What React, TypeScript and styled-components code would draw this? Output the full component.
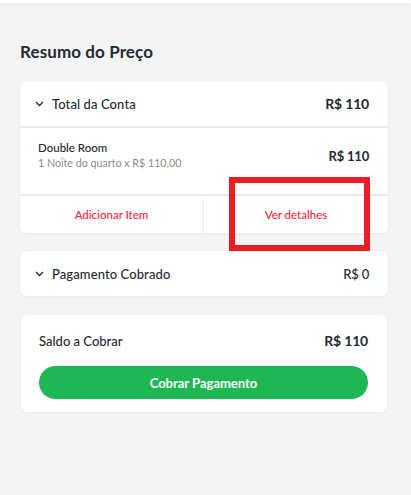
import React from "react";
import styled, { createGlobalStyle } from "styled-components";

const Global = createGlobalStyle`
  html, body { margin: 0; padding: 0; background: #f3f4f6; }
  body { font-family: Lato, "Noto Sans", sans-serif; color: #1f2430; }
  * { box-sizing: border-box; }
`;

const Page = styled.div`
  position: relative;
  min-height: 495px;
  background: #f3f4f6;
`;

const TopBar = styled.div`
  height: 3px;
  background: #ffffff;
  box-shadow: 0 2px 6px rgba(0, 0, 0, 0.06);
`;

const Content = styled.div`
  padding: 38px 23px 0 20px;
  display: flex;
  flex-direction: column;
`;

const Title = styled.h2`
  margin: 0 0 19px;
  font-size: 17px;
  font-weight: 700;
  line-height: 22px;
  color: #262a33;
  letter-spacing: 0.1px;
`;

const Card = styled.div<{ $inset?: boolean }>`
  background: #fff;
  border-radius: 7px;
  box-shadow: 0 1px 3px rgba(0, 0, 0, 0.05);
  margin: ${(p) => (p.$inset ? "0 1px 0 1px" : "0")};
  overflow: hidden;
`;

const HeaderRow = styled.div<{ $bordered?: boolean }>`
  height: ${(p) => (p.$bordered ? "46px" : "45px")};
  display: flex;
  align-items: center;
  padding: 0 19px 0 15px;
  border-bottom: ${(p) => (p.$bordered ? "2px solid #ececee" : "none")};
`;

const Chevron = styled.svg`
  width: 9px;
  height: 6px;
  margin-right: 8px;
  flex: none;
`;

const HeaderLabel = styled.span`
  flex: 1;
  font-size: 13px;
  font-weight: 500;
  color: #262a33;
  letter-spacing: 0.1px;
`;

const Amount = styled.span<{ $size?: number; $weight?: number; $offset?: number }>`
  font-size: ${(p) => p.$size ?? 14}px;
  font-weight: ${(p) => p.$weight ?? 700};
  line-height: 16px;
  margin-top: ${(p) => p.$offset ?? 0}px;
  color: #262a33;
  letter-spacing: -0.2px;
`;

const ItemRow = styled.div`
  height: 68px;
  display: flex;
  align-items: flex-start;
  padding: 13px 19px 0 18px;
  border-bottom: 2px solid #ececee;
`;

const ItemText = styled.div`
  flex: 1;
  display: flex;
  flex-direction: column;
  gap: 1px;
`;

const ItemName = styled.span`
  font-size: 11.5px;
  line-height: 14px;
  font-weight: 500;
  color: #262a33;
`;

const ItemSub = styled.span`
  font-size: 10.7px;
  line-height: 14px;
  color: #8a8d94;
`;

const Actions = styled.div`
  height: 37px;
  display: grid;
  grid-template-columns: 183px 1fr;
`;

const ActionButton = styled.button`
  border: none;
  background: #fff;
  font-family: inherit;
  font-size: 11.5px;
  font-weight: 500;
  color: #f2263a;
  cursor: pointer;
  & + & {
    border-left: 1px solid #ececee;
  }
`;

const BalanceCard = styled(Card)`
  padding: 16px 19px 13px 18px;
  display: flex;
  flex-direction: column;
  gap: 15px;
`;

const BalanceRow = styled.div`
  display: flex;
  align-items: center;
  justify-content: space-between;
  height: 20px;
`;

const BalanceLabel = styled.span`
  font-size: 13px;
  font-weight: 500;
  color: #262a33;
`;

const PayButton = styled.button`
  height: 33px;
  border: none;
  border-radius: 17px;
  background: #1db853;
  color: #fff;
  font-family: inherit;
  font-size: 13px;
  font-weight: 700;
  cursor: pointer;
`;

const Spacer = styled.div<{ $h: number }>`
  height: ${(p) => p.$h}px;
`;

const Highlight = styled.div`
  position: absolute;
  left: 229px;
  top: 177px;
  width: 141px;
  height: 74px;
  border: 6px solid #ed1c24;
  pointer-events: none;
`;

const ChevronIcon = () => (
  <Chevron viewBox="0 0 9 6">
    <path d="M1 1l3.5 3.5L8 1" fill="none" stroke="#262a33" strokeWidth="1.3" />
  </Chevron>
);

export default function App() {
  return (
    <Page>
      <Global />
      <TopBar />
      <Content>
        <Title>Resumo do Preço</Title>
        <Card>
          <HeaderRow $bordered>
            <ChevronIcon />
            <HeaderLabel>Total da Conta</HeaderLabel>
            <Amount>R$ 110</Amount>
          </HeaderRow>
          <ItemRow>
            <ItemText>
              <ItemName>Double Room</ItemName>
              <ItemSub>1 Noite do quarto x R$ 110,00</ItemSub>
            </ItemText>
            <Amount $size={13} $offset={7}>R$ 110</Amount>
          </ItemRow>
          <Actions>
            <ActionButton>Adicionar Item</ActionButton>
            <ActionButton>Ver detalhes</ActionButton>
          </Actions>
        </Card>
        <Spacer $h={18} />
        <Card>
          <HeaderRow>
            <ChevronIcon />
            <HeaderLabel>Pagamento Cobrado</HeaderLabel>
            <Amount $size={13} $weight={500}>R$ 0</Amount>
          </HeaderRow>
        </Card>
        <Spacer $h={19} />
        <BalanceCard $inset>
          <BalanceRow>
            <BalanceLabel>Saldo a Cobrar</BalanceLabel>
            <Amount>R$ 110</Amount>
          </BalanceRow>
          <PayButton>Cobrar Pagamento</PayButton>
        </BalanceCard>
      </Content>
      <Highlight />
    </Page>
  );
}
